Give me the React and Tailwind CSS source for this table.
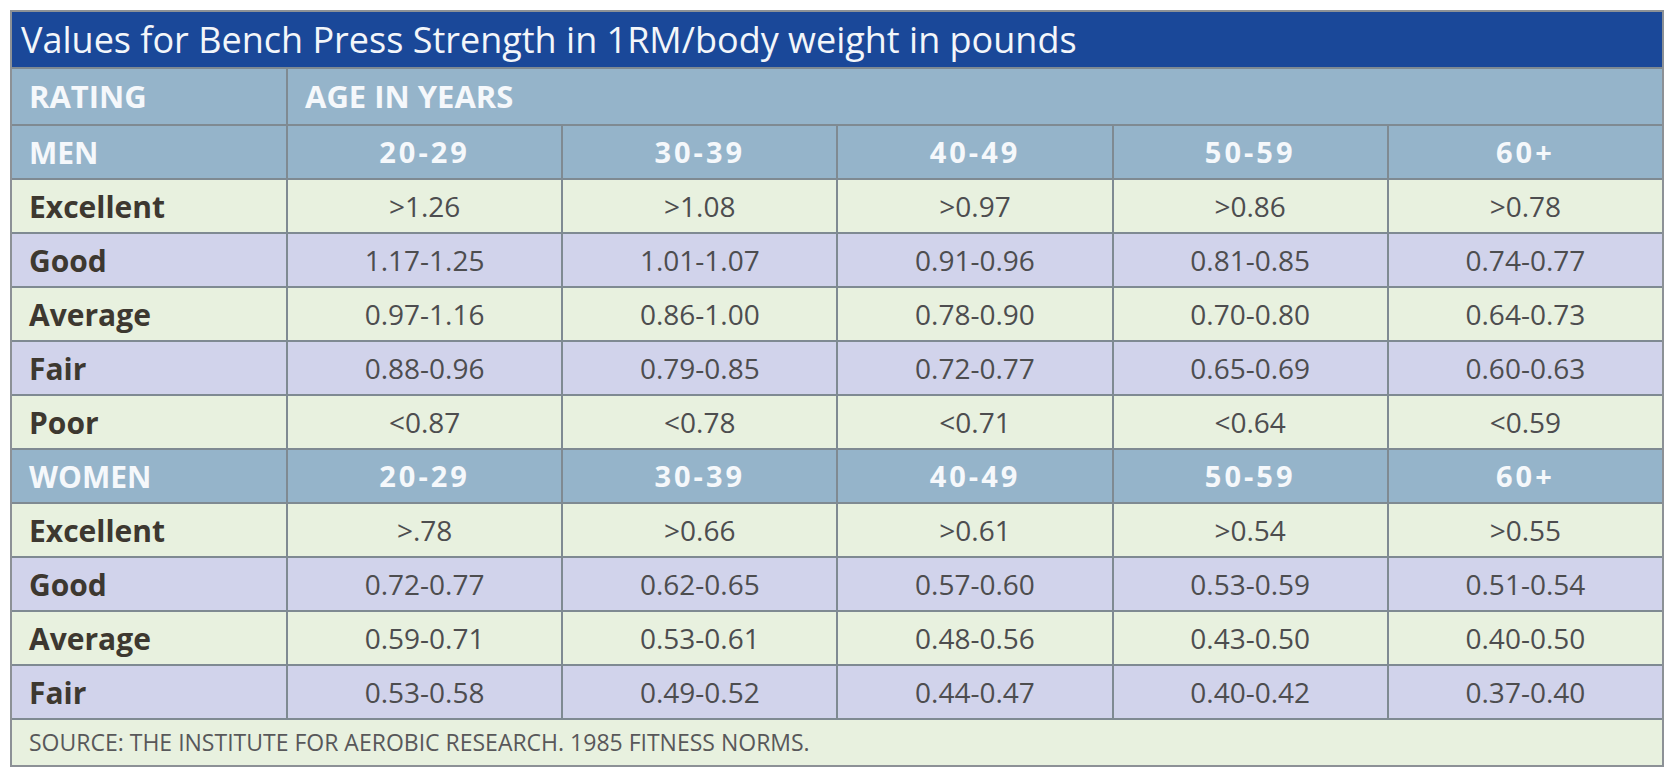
import React from "react";

const font = { fontFamily: '"Open Sans", "Liberation Sans", sans-serif' };

const ages = ["20-29", "30-39", "40-49", "50-59", "60+"];

const men = [
  ["Excellent", [">1.26", ">1.08", ">0.97", ">0.86", ">0.78"]],
  ["Good", ["1.17-1.25", "1.01-1.07", "0.91-0.96", "0.81-0.85", "0.74-0.77"]],
  ["Average", ["0.97-1.16", "0.86-1.00", "0.78-0.90", "0.70-0.80", "0.64-0.73"]],
  ["Fair", ["0.88-0.96", "0.79-0.85", "0.72-0.77", "0.65-0.69", "0.60-0.63"]],
  ["Poor", ["<0.87", "<0.78", "<0.71", "<0.64", "<0.59"]],
];

const women = [
  ["Excellent", [">.78", ">0.66", ">0.61", ">0.54", ">0.55"]],
  ["Good", ["0.72-0.77", "0.62-0.65", "0.57-0.60", "0.53-0.59", "0.51-0.54"]],
  ["Average", ["0.59-0.71", "0.53-0.61", "0.48-0.56", "0.43-0.50", "0.40-0.50"]],
  ["Fair", ["0.53-0.58", "0.49-0.52", "0.44-0.47", "0.40-0.42", "0.37-0.40"]],
];

const GroupHeader = ({ label }) => (
  <>
    <div className="bg-[#95b4ca] h-[52px] flex items-center pl-[17px] text-[30px] font-bold text-[#f5f8fb]">{label}</div>
    {ages.map((a) => (
      <div key={a} className="bg-[#95b4ca] h-[52px] flex items-center justify-center text-[29px] font-bold tracking-[3px] text-[#f5f8fb]">
        {a}
      </div>
    ))}
  </>
);

const Rows = ({ rows }) =>
  rows.map(([label, vals], i) => {
    const bg = i % 2 === 0 ? "bg-[#e8f1df]" : "bg-[#d1d3eb]";
    return (
      <React.Fragment key={label}>
        <div className={`${bg} h-[52px] flex items-center pl-[17px] text-[30px] font-bold text-[#3d3830]`}>{label}</div>
        {vals.map((v, j) => (
          <div key={j} className={`${bg} h-[52px] flex items-center justify-center text-[28px] text-[#4d4d4f]`}>
            {v}
          </div>
        ))}
      </React.Fragment>
    );
  });

export default function App() {
  return (
    <div className="bg-white w-[1673px] h-[777px] pt-[10px] pl-[10px]" style={font}>
      <div className="w-[1654px] border-2 border-[#8c9196] bg-[#7f8a92]">
        <div className="grid grid-cols-[274px_repeat(5,1fr)] gap-[2px]">
          <div className="col-span-6 bg-[#1a4899] h-[55px] flex items-center pl-[9px] text-[36px] text-[#f3f6fa] leading-none">
            Values for Bench Press Strength in 1RM/body weight in pounds
          </div>
          <div className="bg-[#95b4ca] h-[55px] flex items-center pl-[17px] text-[31px] font-bold text-[#f5f8fb]">RATING</div>
          <div className="col-span-5 bg-[#95b4ca] h-[55px] flex items-center pl-[17px] text-[31px] font-bold text-[#f5f8fb]">
            AGE IN YEARS
          </div>
          <GroupHeader label="MEN" />
          <Rows rows={men} />
          <GroupHeader label="WOMEN" />
          <Rows rows={women} />
          <div className="col-span-6 bg-[#e8f1df] h-[45px] flex items-center pl-[17px] text-[23px] text-[#58585a]">
            SOURCE: THE INSTITUTE FOR AEROBIC RESEARCH. 1985 FITNESS NORMS.
          </div>
        </div>
      </div>
    </div>
  );
}
